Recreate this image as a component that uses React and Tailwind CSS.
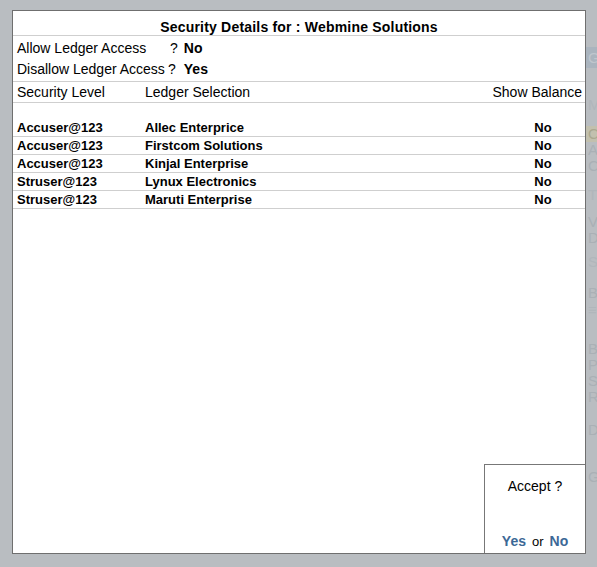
const rows = [
  { level: "Accuser@123", ledger: "Allec Enterprice", show: "No" },
  { level: "Accuser@123", ledger: "Firstcom Solutions", show: "No" },
  { level: "Accuser@123", ledger: "Kinjal Enterprise", show: "No" },
  { level: "Struser@123", ledger: "Lynux Electronics", show: "No" },
  { level: "Struser@123", ledger: "Maruti Enterprise", show: "No" },
];

const App = () => {
  return (
    <div
      className="w-[597px] h-[567px] bg-[#b9bdc1] flex overflow-hidden text-black"
      style={{ fontFamily: '"Liberation Sans", Arial, sans-serif' }}
    >
      <div className="w-[12px] shrink-0" />

      {/* Main panel */}
      <div className="relative mt-[10px] w-[574px] h-[544px] shrink-0 bg-white border border-[#6f6f6f] flex flex-col">
        {/* Title */}
        <div className="h-[25px] border-b border-[#cfcfcf] flex items-end justify-center">
          <span className="text-[14px] leading-[16px] font-bold tracking-[0.2px]">Security Details for : Webmine Solutions</span>
        </div>

        {/* Access settings */}
        <div className="h-[46px] pt-[2px] border-b border-[#cfcfcf] text-[14px]">
          <div className="h-[21px] leading-[21px] flex pl-[4px]">
            <span className="w-[153px]">Allow Ledger Access</span>
            <span>?</span>
            <span className="ml-[6px] font-bold">No</span>
          </div>
          <div className="h-[21px] leading-[21px] flex pl-[4px]">
            <span className="w-[151px]">Disallow Ledger Access</span>
            <span>?</span>
            <span className="ml-[8px] font-bold">Yes</span>
          </div>
        </div>

        {/* Header */}
        <div className="h-[21px] border-b border-[#cfcfcf] flex text-[14px] leading-[20px] pl-[4px] pr-[3px]">
          <span className="w-[128px]">Security Level</span>
          <span className="flex-1">Ledger Selection</span>
          <span>Show Balance</span>
        </div>

        <div className="h-[16px]" />

        {/* Data rows */}
        {rows.map((r, i) => (
          <div key={i} className="h-[18px] border-b border-[#cfcfcf] flex text-[13px] pt-[1px] leading-[16px] font-bold pl-[4px]">
            <span className="w-[128px]">{r.level}</span>
            <span className="flex-1">{r.ledger}</span>
            <span className="w-[60px] mr-[12px] text-center">{r.show}</span>
          </div>
        ))}

        {/* Accept box */}
        <div className="absolute right-0 bottom-0 w-[101px] h-[89px] bg-white border-l border-t border-[#777777] flex flex-col items-center justify-between pt-[13px] pb-[3px] text-[14px] leading-[16px]">
          <span>Accept ?</span>
          <span>
            <span className="font-bold text-[#3c6896]">Yes</span>
            <span className="mx-[6px] text-[13px]">or</span>
            <span className="font-bold text-[#3c6896]">No</span>
          </span>
        </div>
      </div>

      {/* Faded background strip */}
      <div className="flex-1 flex flex-col text-[15px] leading-[16px] text-[#aab0b5] pl-[2px]">
        <div className="mt-[47px] h-[21px] leading-[21px] -ml-[2px] pl-[2px] bg-[#aab4be] text-[#bfc6cd]">G</div>
        <div className="mt-[29px] h-[16px] text-[#b0b6bb]">M</div>
        <div className="mt-[13px] h-[16px] -ml-[2px] pl-[2px] bg-[#c2c0ae] text-[#aaa890]">C</div>
        <div className="h-[16px]">A</div>
        <div className="h-[16px]">C</div>
        <div className="mt-[13px] h-[16px] text-[#b0b6bb]">T</div>
        <div className="mt-[11px] h-[16px]">V</div>
        <div className="h-[16px]">D</div>
        <div className="mt-[8px] h-[16px] text-[#b0b6bb]">S</div>
        <div className="mt-[15px] h-[16px]">B</div>
        <div className="mt-[1px] h-[16px] text-[#b0b6bb]">≡</div>
        <div className="mt-[23px] h-[16px]">B</div>
        <div className="h-[16px]">P</div>
        <div className="h-[16px]">S</div>
        <div className="h-[16px]">R</div>
        <div className="mt-[17px] h-[16px]">D</div>
        <div className="mt-[31px] h-[16px]">G</div>
      </div>
    </div>
  );
};

export default App;
